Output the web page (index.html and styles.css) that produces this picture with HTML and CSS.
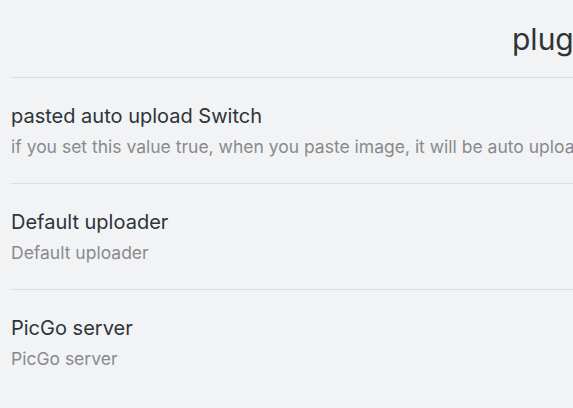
FILE: index.html
```html
<!DOCTYPE html>
<html>
<head>
<meta charset="utf-8">
<link rel="stylesheet" href="styles.css">
</head>
<body>
<div class="page">
  <h2 class="heading">plugin settings</h2>
  <div class="setting-item">
    <div class="name">pasted auto upload Switch</div>
    <div class="desc">if you set this value true, when you paste image, it will be auto uploaded(you should set the picGo server rightly)</div>
  </div>
  <div class="setting-item">
    <div class="name">Default uploader</div>
    <div class="desc">Default uploader</div>
  </div>
  <div class="setting-item">
    <div class="name">PicGo server</div>
    <div class="desc">PicGo server</div>
  </div>
</div>
</body>
</html>
```
FILE: styles.css
```css
html, body {
  margin: 0;
  padding: 0;
  background: #f2f3f5;
  overflow: hidden;
}
.page {
  width: 1400px;
  padding: 0 0 0 11px;
  font-family: Inter, "Noto Sans", sans-serif;
}
.heading {
  margin: 0;
  padding: 21px 0 20px 501px;
  font-size: 30px;
  font-weight: 400;
  line-height: 36px;
  color: #2e3338;
  white-space: nowrap;
}
.setting-item {
  border-top: 1px solid #dcdddf;
  padding: 26px 0 25px 0;
}
.name {
  font-size: 20px;
  line-height: 24px;
  color: #2e3338;
  white-space: nowrap;
}
.desc {
  margin-top: 8px;
  font-size: 17.5px;
  line-height: 22px;
  color: #888a8d;
  white-space: nowrap;
}
```
